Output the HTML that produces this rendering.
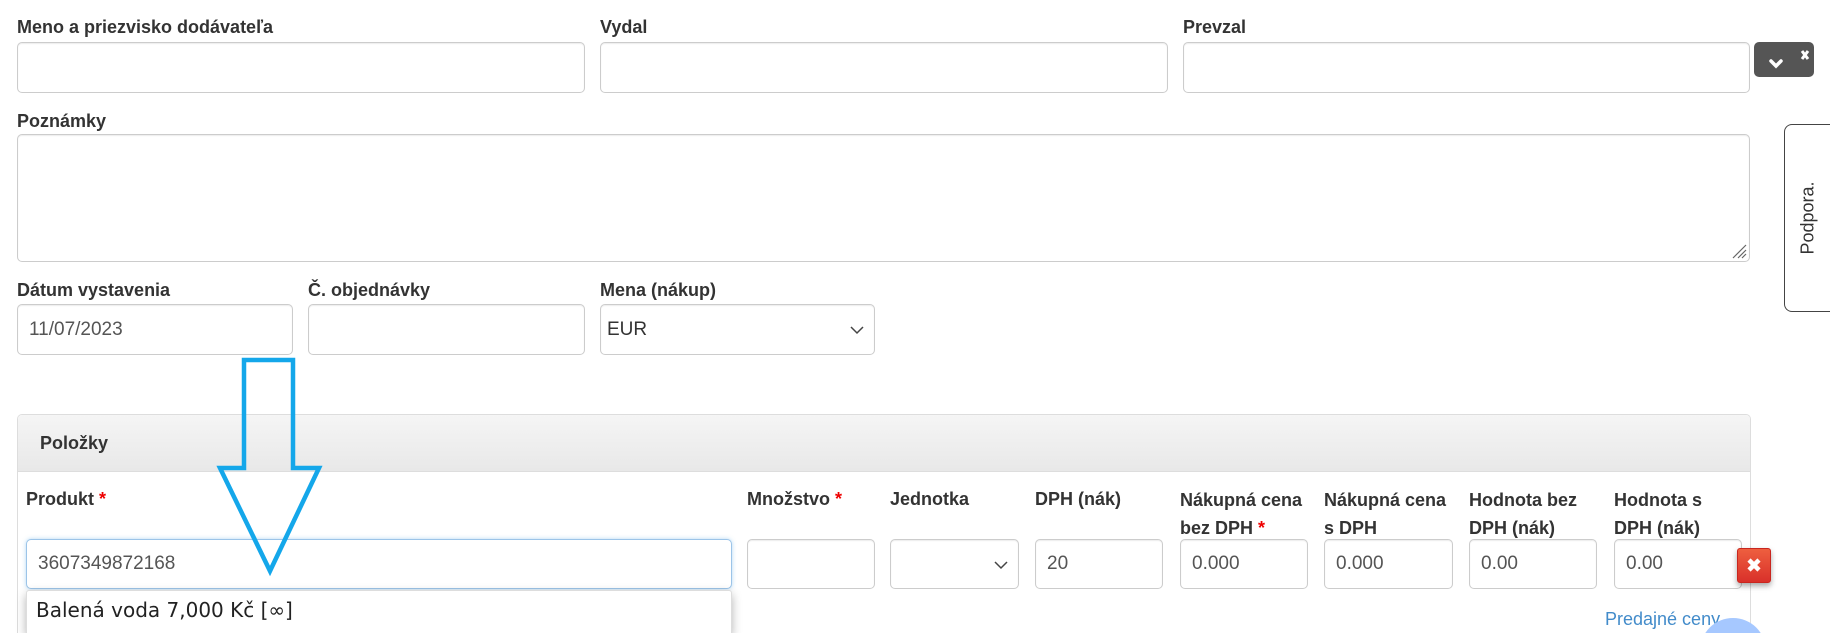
<!DOCTYPE html>
<html><head><meta charset="utf-8"><style>
*{box-sizing:border-box}
html,body{margin:0;width:1830px;height:633px;overflow:hidden}
body{background:#fff;font-family:"Liberation Sans",Arial,sans-serif;color:#333;position:relative}
.l{position:absolute;font-weight:bold;font-size:18px;line-height:26px;color:#333;white-space:nowrap}
.i{position:absolute;border:1px solid #ccc;border-radius:5px;background:#fff;box-shadow:inset 0 1px 1px rgba(0,0,0,.075);font-size:19px;color:#555;padding-left:11px;display:flex;align-items:center}
.r{color:#e00}
</style></head><body>
<div class="l" style="left:17px;top:14px">Meno a priezvisko dodávateľa</div>
<div class="l" style="left:600px;top:14px">Vydal</div>
<div class="l" style="left:1183px;top:14px">Prevzal</div>
<div class="i" style="left:17px;top:42px;width:568px;height:51px"></div>
<div class="i" style="left:600px;top:42px;width:568px;height:51px"></div>
<div class="i" style="left:1183px;top:42px;width:567px;height:51px"></div>
<div style="position:absolute;left:1754px;top:42px;width:60px;height:35px;background:#555;border-radius:5px">
<svg width="60" height="35" style="position:absolute;left:0;top:0"><path d="M17 19 L22 24 L27 19" stroke="#fff" stroke-width="3.5" fill="none" stroke-linecap="round"/><path d="M48 9 L54 17 M54 9 L48 17" stroke="#fff" stroke-width="3"/></svg></div>
<div class="l" style="left:17px;top:108px">Poznámky</div>
<div class="i" style="left:17px;top:134px;width:1733px;height:128px">
<svg width="16" height="16" style="position:absolute;right:2px;bottom:2px"><path d="M15 2 L2 15 M15 7 L7 15 M15 11 L11 15" stroke="#666" stroke-width="1.2"/></svg></div>
<div style="position:absolute;left:1784px;top:124px;width:46px;height:188px;border:1px solid #444;border-right:none;border-radius:8px 0 0 8px;background:#fff"></div>
<div style="position:absolute;left:1808px;top:218px;transform:translate(-50%,-50%) rotate(-90deg);font-size:18px;color:#333;white-space:nowrap">Podpora.</div>
<div class="l" style="left:17px;top:277px">Dátum vystavenia</div>
<div class="l" style="left:308px;top:277px">Č. objednávky</div>
<div class="l" style="left:600px;top:277px">Mena (nákup)</div>
<div class="i" style="left:17px;top:304px;width:276px;height:51px">11/07/2023</div>
<div class="i" style="left:308px;top:304px;width:277px;height:51px"></div>
<div class="i" style="left:600px;top:304px;width:275px;height:51px;padding-left:6px;color:#333">EUR
<svg width="14" height="10" style="position:absolute;right:10px;top:20px"><path d="M1 2 L7 8 L13 2" stroke="#444" stroke-width="1.5" fill="none"/></svg></div>

<div style="position:absolute;left:17px;top:414px;width:1734px;height:219px;border:1px solid #ddd;border-bottom:none;border-radius:5px 5px 0 0;overflow:hidden">
<div style="height:57px;background:linear-gradient(#f5f5f5,#e8e8e8);border-bottom:1px solid #ddd"></div></div>
<div class="l" style="left:40px;top:430px">Položky</div>

<div class="l" style="left:26px;top:486px">Produkt <span class="r">*</span></div>
<div class="l" style="left:747px;top:486px">Množstvo <span class="r">*</span></div>
<div class="l" style="left:890px;top:486px">Jednotka</div>
<div class="l" style="left:1035px;top:486px">DPH (nák)</div>
<div class="l" style="left:1180px;top:486px;line-height:28px">Nákupná cena<br>bez DPH <span class="r">*</span></div>
<div class="l" style="left:1324px;top:486px;line-height:28px">Nákupná cena<br>s DPH</div>
<div class="l" style="left:1469px;top:486px;line-height:28px">Hodnota bez<br>DPH (nák)</div>
<div class="l" style="left:1614px;top:486px;line-height:28px">Hodnota s<br>DPH (nák)</div>

<div class="i" style="left:26px;top:539px;width:706px;height:50px;border-color:#9cc4e8;box-shadow:0 0 4px rgba(102,175,233,.5)">3607349872168</div>
<div class="i" style="left:747px;top:539px;width:128px;height:50px"></div>
<div class="i" style="left:890px;top:539px;width:129px;height:50px">
<svg width="14" height="10" style="position:absolute;right:10px;top:20px"><path d="M1 2 L7 8 L13 2" stroke="#444" stroke-width="1.5" fill="none"/></svg></div>
<div class="i" style="left:1035px;top:539px;width:128px;height:50px">20</div>
<div class="i" style="left:1180px;top:539px;width:128px;height:50px">0.000</div>
<div class="i" style="left:1324px;top:539px;width:129px;height:50px">0.000</div>
<div class="i" style="left:1469px;top:539px;width:128px;height:50px">0.00</div>
<div class="i" style="left:1614px;top:539px;width:128px;height:50px">0.00</div>
<div style="position:absolute;left:1737px;top:548px;width:34px;height:35px;background:linear-gradient(#ee5f3f,#d9302a);border:1px solid #c9261f;border-radius:3px;box-shadow:0 3px 6px rgba(0,0,0,.35)">
<svg width="34" height="35" style="position:absolute;left:-1px;top:-1px"><path d="M12 12 L22 22 M22 12 L12 22" stroke="#fff" stroke-width="4.5"/></svg></div>

<div style="position:absolute;left:26px;top:590px;width:706px;height:43px;background:#fff;box-shadow:0 4px 10px rgba(0,0,0,.3);border:1px solid #ddd;border-bottom:none;border-radius:3px 3px 0 0"></div>
<div style="position:absolute;left:36px;top:597px;font-family:'DejaVu Sans',sans-serif;font-size:20px;line-height:26px;color:#222;white-space:nowrap">Balená voda 7,000 Kč [∞]</div>
<div style="position:absolute;left:1605px;top:608px;font-size:18px;line-height:22px;color:#428bca;white-space:nowrap">Predajné ceny –</div>

<svg width="1830" height="633" style="position:absolute;left:0;top:0;pointer-events:none">
<circle cx="1733" cy="651" r="33" fill="#a6c8ff"/>
<path d="M244 360 L293 360 L293 468 L319 468 L270 571 L220 468 L244 468 Z" fill="none" stroke="#14a7ea" stroke-width="4.5" stroke-linejoin="miter"/>
</svg>
</body></html>
